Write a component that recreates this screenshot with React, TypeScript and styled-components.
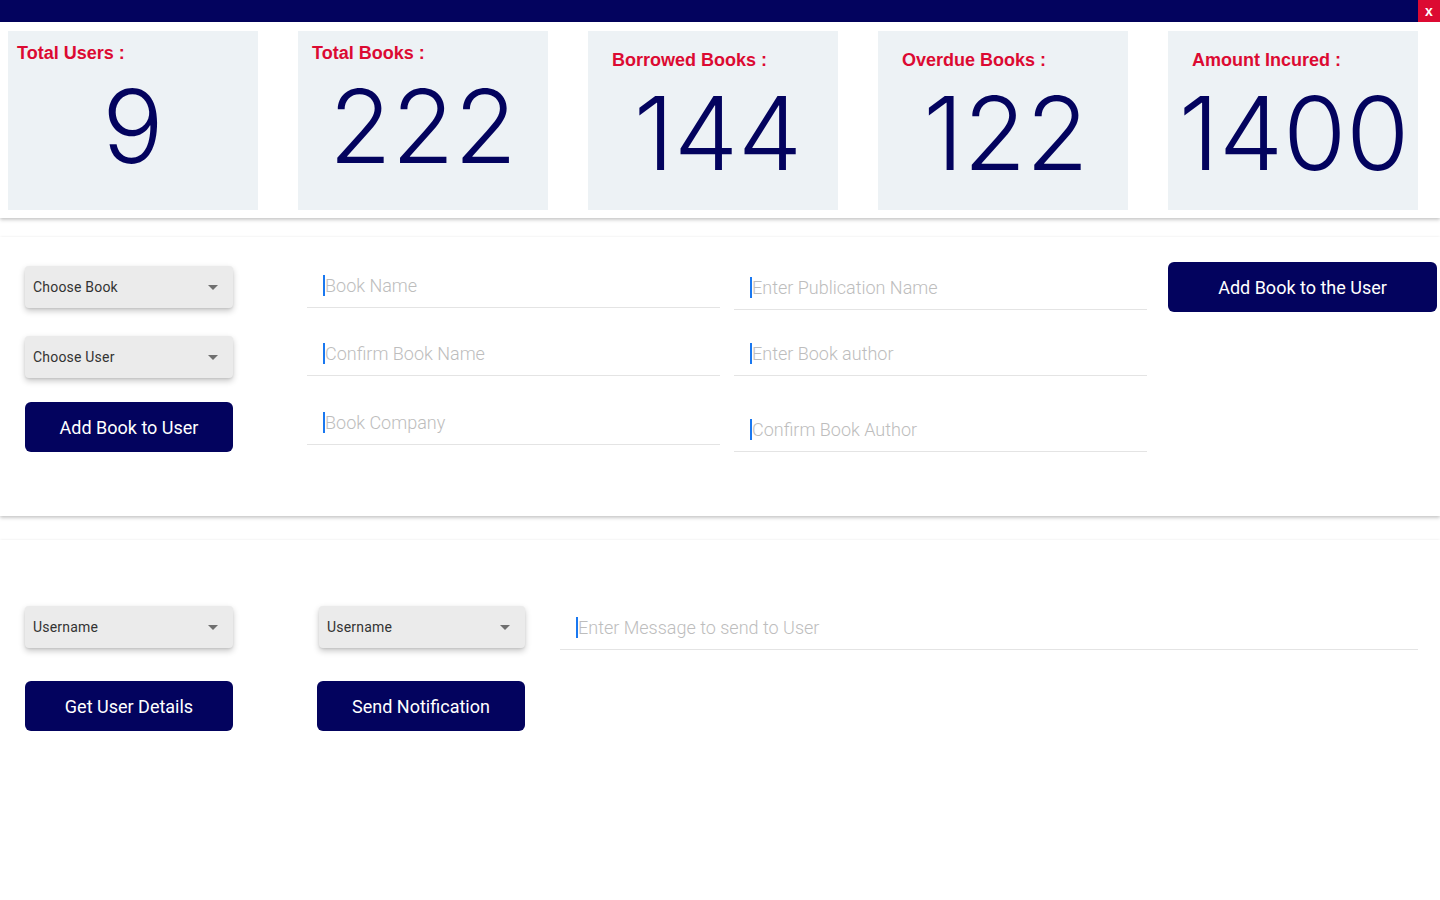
import React from "react";
import styled, { createGlobalStyle } from "styled-components";

const GlobalStyle = createGlobalStyle`
  html, body {
    margin: 0;
    padding: 0;
    background: #ffffff;
    font-family: Roboto, "Liberation Sans", Arial, sans-serif;
    overflow: hidden;
  }
  * { box-sizing: border-box; }
`;

const NAVY = "#03035e";
const RED = "#dc0a32";

const TopBar = styled.div`
  height: 22px;
  background: ${NAVY};
  display: flex;
  justify-content: flex-end;
`;

const CloseBtn = styled.button`
  width: 22px;
  height: 22px;
  border: 0;
  padding: 0;
  background: ${RED};
  color: #ffffff;
  font-family: "Liberation Sans", Arial, sans-serif;
  font-weight: bold;
  font-size: 14px;
  line-height: 22px;
  cursor: pointer;
`;

const Section = styled.section<{ $mt?: number; $h?: number }>`
  background: #ffffff;
  margin-top: ${(p) => p.$mt || 0}px;
  height: ${(p) => (p.$h ? `${p.$h}px` : "auto")};
  box-shadow: 0 1px 3px rgba(0, 0, 0, 0.1), 0 2px 4px rgba(0, 0, 0, 0.16);
`;

const StatsRow = styled.div`
  display: flex;
  gap: 40px;
  padding: 9px 8px 8px;
`;

const Card = styled.div<{ $padX: number; $padTop: number }>`
  width: 250px;
  height: 179px;
  background: #edf2f5;
  padding: ${(p) => p.$padTop}px ${(p) => p.$padX}px 0;
  display: flex;
  flex-direction: column;
`;

const CardLabel = styled.div`
  font-family: "Liberation Sans", Arial, sans-serif;
  font-size: 18px;
  line-height: 22px;
  font-weight: 700;
  color: ${RED};
`;

const CardNumber = styled.div<{ $padX: number; $shift: number }>`
  margin: 11px 0 0 ${(p) => p.$shift - p.$padX}px;
  width: 250px;
  text-align: center;
  font-family: Inter, Roboto, sans-serif;
  font-size: 102px;
  line-height: 1;
  font-weight: 300;
  color: ${NAVY};
`;

const FormRow = styled.div<{ $pt: number }>`
  display: flex;
  align-items: flex-start;
  padding: ${(p) => p.$pt}px 0 0 25px;
`;

const Column = styled.div<{ $w: number; $ml?: number }>`
  width: ${(p) => p.$w}px;
  margin-left: ${(p) => p.$ml || 0}px;
  display: flex;
  flex-direction: column;
`;

const SelectBox = styled.div<{ $mt?: number; $ml?: number }>`
  height: 42px;
  margin-top: ${(p) => p.$mt || 0}px;
  margin-left: ${(p) => p.$ml || 0}px;
  background: #ebebeb;
  border-radius: 4px;
  box-shadow: 0 3px 6px rgba(0, 0, 0, 0.22), 0 1px 2px rgba(0, 0, 0, 0.08);
  display: flex;
  align-items: center;
  justify-content: space-between;
  padding: 0 15px 0 8px;
  font-size: 14px;
  letter-spacing: 0.2px;
  color: #333333;
  cursor: pointer;
`;

const Caret = () => (
  <svg width="10" height="5" viewBox="0 0 10 5">
    <path d="M0 0 L10 0 L5 5 Z" fill="#6f6f6f" />
  </svg>
);

const Button = styled.button<{ $mt?: number }>`
  height: 50px;
  margin-top: ${(p) => p.$mt || 0}px;
  border: 0;
  border-radius: 6px;
  background: ${NAVY};
  color: #ffffff;
  font-family: Roboto, "Liberation Sans", Arial, sans-serif;
  font-size: 18px;
  cursor: pointer;
`;

const Field = styled.div<{ $mt?: number }>`
  height: 44px;
  margin-top: ${(p) => p.$mt || 0}px;
  border-bottom: 1px solid #e4e4e4;
  display: flex;
  align-items: center;
  padding: 0 16px;
`;

const Input = styled.input`
  width: 100%;
  height: 21px;
  border: 0;
  border-left: 2px solid #1a78f0;
  outline: none;
  padding: 0;
  background: transparent;
  font-family: Roboto, "Liberation Sans", Arial, sans-serif;
  font-weight: 300;
  font-size: 18px;
  color: #333333;
  &::placeholder {
    color: #bdbdbd;
  }
`;

const stats = [
  { label: "Total Users :", value: "9", padX: 9, padTop: 11, shift: 0 },
  { label: "Total Books :", value: "222", padX: 14, padTop: 11, shift: 0 },
  { label: "Borrowed Books :", value: "144", padX: 24, padTop: 18, shift: 5 },
  { label: "Overdue Books :", value: "122", padX: 24, padTop: 18, shift: 3 },
  { label: "Amount Incured :", value: "1400", padX: 24, padTop: 18, shift: 1 },
];

export default function App() {
  return (
    <>
      <GlobalStyle />
      <TopBar>
        <CloseBtn>x</CloseBtn>
      </TopBar>

      <Section>
        <StatsRow>
          {stats.map((s) => (
            <Card key={s.label} $padX={s.padX} $padTop={s.padTop}>
              <CardLabel>{s.label}</CardLabel>
              <CardNumber $padX={s.padX} $shift={s.shift}>
                {s.value}
              </CardNumber>
            </Card>
          ))}
        </StatsRow>
      </Section>

      <Section $mt={19} $h={279}>
        <FormRow $pt={25}>
          <Column $w={208}>
            <SelectBox $mt={4}>
              Choose Book <Caret />
            </SelectBox>
            <SelectBox $mt={28}>
              Choose User <Caret />
            </SelectBox>
            <Button $mt={24}>Add Book to User</Button>
          </Column>
          <Column $w={413} $ml={74}>
            <Field $mt={2}>
              <Input placeholder="Book Name" />
            </Field>
            <Field $mt={24}>
              <Input placeholder="Confirm Book Name" />
            </Field>
            <Field $mt={25}>
              <Input placeholder="Book Company" />
            </Field>
          </Column>
          <Column $w={413} $ml={14}>
            <Field $mt={4}>
              <Input placeholder="Enter Publication Name" />
            </Field>
            <Field $mt={22}>
              <Input placeholder="Enter Book author" />
            </Field>
            <Field $mt={32}>
              <Input placeholder="Confirm Book Author" />
            </Field>
          </Column>
          <Column $w={269} $ml={21}>
            <Button>Add Book to the User</Button>
          </Column>
        </FormRow>
      </Section>

      <Section $mt={24} $h={360}>
        <FormRow $pt={66}>
          <Column $w={208}>
            <SelectBox>
              Username <Caret />
            </SelectBox>
            <Button $mt={33}>Get User Details</Button>
          </Column>
          <Column $w={208} $ml={84}>
            <SelectBox $ml={2}>
              Username <Caret />
            </SelectBox>
            <Button $mt={33}>Send Notification</Button>
          </Column>
          <Column $w={858} $ml={35}>
            <Field>
              <Input placeholder="Enter Message to send to User" />
            </Field>
          </Column>
        </FormRow>
      </Section>
    </>
  );
}
